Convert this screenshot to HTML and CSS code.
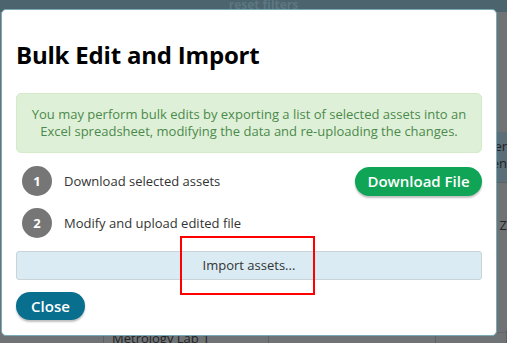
FILE: index.html
```html
<!DOCTYPE html>
<html>
<head>
<meta charset="utf-8">
<link rel="stylesheet" href="styles.css">
</head>
<body>
<div class="page">
  <div class="topbar"><span class="reset">reset filters</span></div>
  <div class="side">
    <div class="side-cell s1"><span>er</span><span>en</span></div>
    <div class="side-cell s2"><span>n Z</span></div>
  </div>
  <div class="table-row">
    <div class="col c0"></div>
    <div class="col c1">Metrology Lab 1</div>
    <div class="col c2"></div>
    <div class="col c3"></div>
  </div>
</div>

<div class="modal">
  <h2 class="title">Bulk Edit and Import</h2>
  <div class="alert">You may perform bulk edits by exporting a list of selected assets into an Excel spreadsheet, modifying the data and re-uploading the changes.</div>
  <div class="step">
    <span class="num">1</span>
    <span class="label">Download selected assets</span>
    <button class="btn btn-green">Download File</button>
  </div>
  <div class="step">
    <span class="num">2</span>
    <span class="label">Modify and upload edited file</span>
  </div>
  <div class="import">Import assets...</div>
  <div class="footer"><button class="btn btn-blue">Close</button></div>
</div>
<div class="highlight"></div>
</body>
</html>
```

FILE: styles.css
```css
html, body {
  margin: 0;
  padding: 0;
  width: 507px;
  height: 343px;
  overflow: hidden;
  font-family: "Open Sans", "Noto Sans", sans-serif;
}
body {
  background: #6f7376;
  position: relative;
}
.page {
  width: 507px;
  height: 343px;
  display: flex;
  flex-direction: column;
}
.topbar {
  height: 12px;
  background: #4b646e;
  display: flex;
  justify-content: center;
  align-items: flex-start;
}
.reset {
  color: #5d7782;
  font-weight: 700;
  font-size: 12px;
  line-height: 9px;
  margin-left: 20px;
}
.side {
  flex: 1;
  display: flex;
  flex-direction: column;
  align-items: flex-end;
}
.side-cell {
  width: 10px;
  overflow: hidden;
  font-size: 13px;
  color: #222;
  white-space: nowrap;
  display: flex;
  flex-direction: column;
  direction: rtl;
}
.s1 {
  margin-top: 120px;
  height: 44px;
  padding-top: 6px;
  line-height: 17px;
  background: #5c6e78;
  border-bottom: 1px solid #5a6064;
}
.s2 {
  padding-top: 34px;
  line-height: 17px;
}
.table-row {
  height: 10px;
  display: flex;
  border-top: 1px solid #666;
}
.col {
  border-right: 1px solid #5c6165;
  font-size: 13px;
  line-height: 17px;
  color: #222;
  overflow: hidden;
  white-space: nowrap;
  padding-left: 8px;
  margin-top: -3px;
}
.c0 { width: 95px; }
.c1 { width: 156px; }
.c2 { width: 158px; }
.c3 { flex: 1; }

.modal {
  position: absolute;
  left: 1px;
  top: 9px;
  width: 466px;
  height: 298px;
  background: #fff;
  border: 1px solid #7aa9b8;
  border-radius: 5px;
  padding: 14px 14px 13px 14px;
  box-sizing: content-box;
  display: flex;
  flex-direction: column;
}
.title {
  margin: 16px 0 0 0;
  font-size: 24px;
  line-height: 30px;
  font-weight: 700;
  letter-spacing: -0.2px;
  color: #000;
}
.alert {
  margin-top: 23px;
  background: #dff0d8;
  border: 1px solid #d4eac9;
  border-radius: 5px;
  color: #4b8a4c;
  font-size: 13px;
  line-height: 16.5px;
  text-align: center;
  padding: 12px 14px 13px;
}
.step {
  display: flex;
  align-items: center;
  height: 30px;
  margin-top: 13px;
}
.step + .step { margin-top: 12px; }
.num {
  width: 30px;
  height: 30px;
  border-radius: 50%;
  background: #767676;
  color: #fff;
  font-weight: 700;
  font-size: 13px;
  display: flex;
  align-items: center;
  justify-content: center;
  margin-left: 6px;
}
.label {
  margin-left: 12px;
  font-size: 13px;
  color: #333;
  flex: 1;
}
.btn {
  border: none;
  font-family: inherit;
  font-weight: 600;
  color: #fff;
  font-size: 15px;
  border-radius: 15px;
  box-shadow: 0 2px 2px rgba(0,0,0,0.25);
  padding: 0;
}
.btn-green {
  background: #0fa456;
  width: 127px;
  height: 29px;
}
.btn-blue {
  background: #086f8e;
  width: 69px;
  height: 28px;
}
.import {
  margin-top: 13px;
  height: 27px;
  line-height: 27px;
  background: #daebf3;
  border: 1px solid #c9d3d8;
  border-radius: 3px;
  text-align: center;
  font-size: 13px;
  color: #333;
}
.footer {
  margin-top: 12px;
  display: flex;
}
.highlight {
  position: absolute;
  left: 180px;
  top: 236px;
  width: 131px;
  height: 55px;
  border: 2px solid #ff0000;
}
```
